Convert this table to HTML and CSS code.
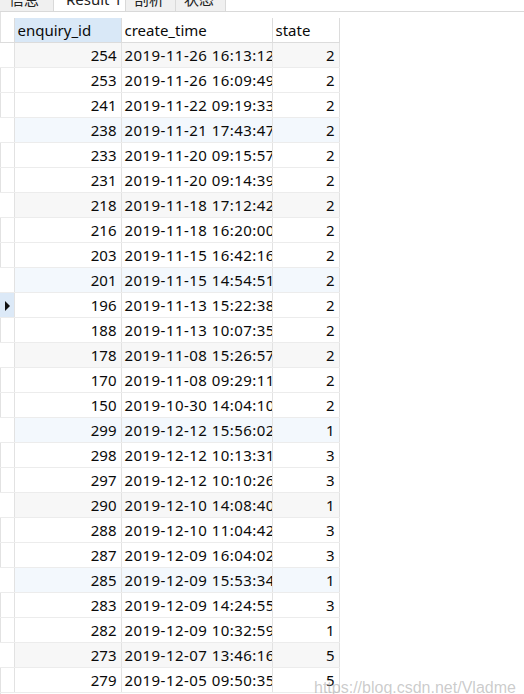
FILE: index.html
```html
<!DOCTYPE html>
<html lang="zh">
<head>
    <meta charset="UTF-8">
    <meta name="viewport" content="width=device-width, initial-scale=1.0">
    <title>Result 1</title>
    <link rel="stylesheet" href="styles.css">
</head>
<body>

    <div class="tabs">
        <div class="tab tab-first">信息</div>
        <div class="tab active">Result 1</div>
        <div class="tab">剖析</div>
        <div class="tab">状态</div>
    </div>

    <div class="grid-wrap">
        <table class="grid">
            <colgroup>
                <col class="c-gutter">
                <col class="c-id">
                <col class="c-time">
                <col class="c-state">
            </colgroup>
            <thead>
                <tr>
                    <th class="gutter"></th>
                    <th class="selected">enquiry_id</th>
                    <th>create_time</th>
                    <th>state</th>
                </tr>
            </thead>
            <tbody>
                <tr class="gray"><td class="gutter"></td><td class="num">254</td><td class="time">2019-11-26 16:13:12</td><td class="num">2</td></tr>
                <tr><td class="gutter"></td><td class="num">253</td><td class="time">2019-11-26 16:09:49</td><td class="num">2</td></tr>
                <tr><td class="gutter"></td><td class="num">241</td><td class="time">2019-11-22 09:19:33</td><td class="num">2</td></tr>
                <tr class="blue"><td class="gutter"></td><td class="num">238</td><td class="time">2019-11-21 17:43:47</td><td class="num">2</td></tr>
                <tr><td class="gutter"></td><td class="num">233</td><td class="time">2019-11-20 09:15:57</td><td class="num">2</td></tr>
                <tr><td class="gutter"></td><td class="num">231</td><td class="time">2019-11-20 09:14:39</td><td class="num">2</td></tr>
                <tr class="gray"><td class="gutter"></td><td class="num">218</td><td class="time">2019-11-18 17:12:42</td><td class="num">2</td></tr>
                <tr><td class="gutter"></td><td class="num">216</td><td class="time">2019-11-18 16:20:00</td><td class="num">2</td></tr>
                <tr><td class="gutter"></td><td class="num">203</td><td class="time">2019-11-15 16:42:16</td><td class="num">2</td></tr>
                <tr class="blue"><td class="gutter"></td><td class="num">201</td><td class="time">2019-11-15 14:54:51</td><td class="num">2</td></tr>
                <tr class="current"><td class="gutter"><span class="arrow"></span></td><td class="num">196</td><td class="time">2019-11-13 15:22:38</td><td class="num">2</td></tr>
                <tr><td class="gutter"></td><td class="num">188</td><td class="time">2019-11-13 10:07:35</td><td class="num">2</td></tr>
                <tr class="gray"><td class="gutter"></td><td class="num">178</td><td class="time">2019-11-08 15:26:57</td><td class="num">2</td></tr>
                <tr><td class="gutter"></td><td class="num">170</td><td class="time">2019-11-08 09:29:11</td><td class="num">2</td></tr>
                <tr><td class="gutter"></td><td class="num">150</td><td class="time">2019-10-30 14:04:10</td><td class="num">2</td></tr>
                <tr class="blue"><td class="gutter"></td><td class="num">299</td><td class="time">2019-12-12 15:56:02</td><td class="num">1</td></tr>
                <tr><td class="gutter"></td><td class="num">298</td><td class="time">2019-12-12 10:13:31</td><td class="num">3</td></tr>
                <tr><td class="gutter"></td><td class="num">297</td><td class="time">2019-12-12 10:10:26</td><td class="num">3</td></tr>
                <tr class="gray"><td class="gutter"></td><td class="num">290</td><td class="time">2019-12-10 14:08:40</td><td class="num">1</td></tr>
                <tr><td class="gutter"></td><td class="num">288</td><td class="time">2019-12-10 11:04:42</td><td class="num">3</td></tr>
                <tr><td class="gutter"></td><td class="num">287</td><td class="time">2019-12-09 16:04:02</td><td class="num">3</td></tr>
                <tr class="blue"><td class="gutter"></td><td class="num">285</td><td class="time">2019-12-09 15:53:34</td><td class="num">1</td></tr>
                <tr><td class="gutter"></td><td class="num">283</td><td class="time">2019-12-09 14:24:55</td><td class="num">3</td></tr>
                <tr><td class="gutter"></td><td class="num">282</td><td class="time">2019-12-09 10:32:59</td><td class="num">1</td></tr>
                <tr class="gray"><td class="gutter"></td><td class="num">273</td><td class="time">2019-12-07 13:46:16</td><td class="num">5</td></tr>
                <tr><td class="gutter"></td><td class="num">279</td><td class="time">2019-12-05 09:50:35</td><td class="num">5</td></tr>
            </tbody>
        </table>
        <div class="watermark">https://blog.csdn.net/Vladme</div>
    </div>

</body>
</html>
```

FILE: styles.css
```css
body {
    margin: 0;
    font-family: "Noto Sans", "Noto Sans CJK SC", sans-serif;
    font-size: 15px;
    color: #0a0a0a;
    background: #fff;
    overflow: hidden;
}

/* tab strip, cut off at the top of the window */
.tabs {
    display: flex;
    align-items: flex-end;
    height: 11px;
    overflow: hidden;
    border-bottom: 1px solid #d9d9d9;
}
.tab {
    display: flex;
    align-items: flex-end;
    height: 24px;
    width: 51px;
    padding: 0 0 4px 8px;
    line-height: 16px;
    font-size: 15px;
    color: #222;
    background-color: #f0f0f0;
    border: 1px solid #d9d9d9;
    border-bottom: none;
    box-sizing: border-box;
}
.tab-first {
    width: 55px;
    margin-left: -1px;
    padding-left: 9px;
}
.tab.active {
    width: 73px;
    height: 26px;
    background-color: #fff;
    padding-left: 12px;
    margin-bottom: -1px;
    padding-bottom: 5px;
}
.tab + .tab {
    margin-left: -1px;
}

.grid-wrap {
    position: relative;
    height: 682px;
    border-left: 1px solid #e2e2e2;
    padding-top: 6px;
    box-sizing: border-box;
}

.grid {
    border-collapse: collapse;
    table-layout: fixed;
    width: 339px;
    margin-left: -1px;
}
.c-gutter { width: 14px; }
.c-id { width: 107px; }
.c-time { width: 151px; }
.c-state { width: 67px; }

.grid th,
.grid td {
    height: 24px;
    padding: 0 4px 0 3px;
    border-right: 1px solid #e2e2e2;
    border-bottom: 1px solid #ececec;
    white-space: nowrap;
    overflow: hidden;
    text-overflow: clip;
    line-height: 24px;
    font-weight: normal;
    text-align: left;
}
.grid th {
    border-bottom-color: #dcdcdc;
    border-right-color: #dcdcdc;
}
.grid th.selected {
    background-color: #d9e8f7;
}
.grid .num {
    text-align: right;
}
.grid .time {
    padding-right: 0;
    letter-spacing: 0.45px;
}
.grid .gutter {
    padding: 0;
    position: relative;
}
.grid tr.gray td {
    background-color: #f7f7f7;
}
.grid tr.blue td {
    background-color: #f3f8fd;
}
.grid tr.gray td.gutter,
.grid tr.blue td.gutter {
    background-color: #fff;
}
.grid tr.current td.gutter {
    background-color: #dce9f7;
}
.arrow {
    position: absolute;
    left: 5px;
    top: 8px;
    width: 0;
    height: 0;
    border-top: 5px solid transparent;
    border-bottom: 5px solid transparent;
    border-left: 5px solid #111;
}

.watermark {
    position: absolute;
    left: 313px;
    top: 667px;
    font-family: "Liberation Sans", Arial, sans-serif;
    font-size: 16px;
    color: rgba(160, 160, 160, 0.55);
    white-space: nowrap;
}
```
